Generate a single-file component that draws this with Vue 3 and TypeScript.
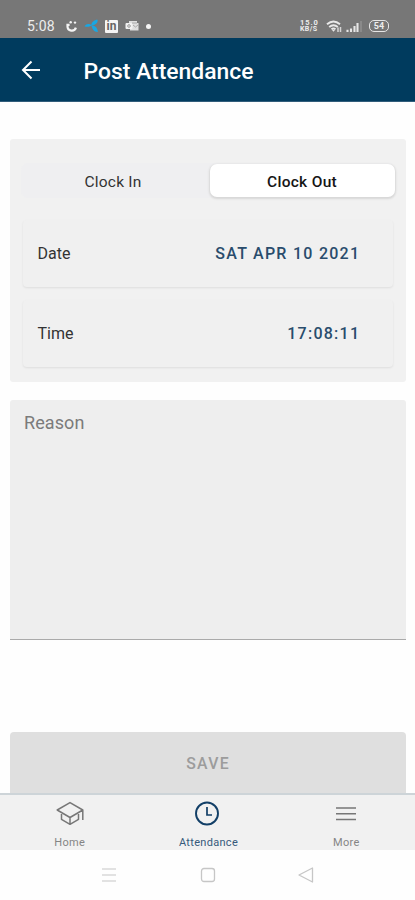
<script setup lang="ts">
import { ref } from 'vue'

type Mode = 'Clock In' | 'Clock Out'

const modes: Mode[] = ['Clock In', 'Clock Out']
const mode = ref<Mode>('Clock Out')
const reason = ref('')

const entries = [
  { label: 'Date', value: 'SAT APR 10 2021' },
  { label: 'Time', value: '17:08:11' },
]
</script>

<template>
  <div class="screen">
    <div class="status">
      <span class="clock">5:08</span>
      <svg class="s-app" viewBox="0 0 12 13" width="12" height="13">
        <path d="M3.600 4.800H1.500v1.400a4.300 4.300 0 0 0 8.400 1.400" fill="none" stroke="#f4f4f4" stroke-width="2.200" />
        <circle cx="4.700" cy="2.200" r="1.200" fill="#f4f4f4" />
        <circle cx="9" cy="2.600" r="1.200" fill="#f4f4f4" />
      </svg>
      <svg class="s-bird" viewBox="0 0 15 14" width="15" height="14">
        <path d="M.5 7.300C2.400 4.600 5 4.400 7.500 6.200 5.300 8 2.500 8.300.5 7.300Z" fill="#18a7e3" />
        <path d="M7 6.800C7.500 3 10.500.6 13.500.8c.8 2.700-1.800 5.400-6.500 6Z" fill="#18a7e3" />
        <path d="M7.600 6.800c3.400-.6 5.800 1.500 6.200 6.200C10.600 13.200 8.200 10.700 7.600 6.800Z" fill="#18a7e3" />
      </svg>
      <span class="linkedin">in</span>
      <svg class="s-mail" viewBox="0 0 14 12" width="14" height="12">
        <path d="M4 1h8v2h1.500v7.500H5V9H4Z" fill="#dedede" />
        <rect x=".5" y="3" width="7" height="6" rx="1" fill="#f1f1f1" />
        <circle cx="4" cy="6" r="1.300" fill="none" stroke="#999" />
        <path d="m8 5 2.500 2L13 5M7 3h5" fill="none" stroke="#9b9b9b" stroke-width=".8" />
      </svg>
      <i class="dot"></i>
      <span class="rate"><b>15.0</b><b>KB/S</b></span>
      <svg class="s-wifi" viewBox="0 0 16 13" width="16" height="13">
        <path d="M1 4.300Q7.500-1.300 14 4.300M3.200 6.900q4.300-3.500 8.600 0M5.500 9.200q2-1.400 4 0" fill="none" stroke="#e9e9e9" stroke-width="1.900" />
        <path d="m6 10 1.500 1.800L9 10Z" fill="#e9e9e9" />
        <path d="M12 7.500V12M14.500 7v5" stroke="#d6d6d6" stroke-width="1.500" />
      </svg>
      <svg class="s-signal" viewBox="0 0 16 13" width="16" height="13">
        <path d="M1.500 9.800V12M5 8.500V12M8.500 6v6M11.500 3v9" stroke="#e6e6e6" stroke-width="2.100" />
        <path d="M15 1v11" stroke="#989898" stroke-width="1.200" />
      </svg>
      <span class="battery"><b>54</b></span>
    </div>

    <header class="header">
      <svg viewBox="0 0 20 20" width="20" height="20">
        <path d="M10.500 1.500 2 10l8.500 8.500M2.300 10H19" fill="none" stroke="#fff" stroke-width="2" />
      </svg>
      <h1>Post Attendance</h1>
    </header>

    <main class="content">
      <section class="panel">
        <div class="segment">
          <button v-for="m in modes" :key="m" type="button" :class="{ active: mode === m }" @click="mode = m">{{ m }}</button>
        </div>
        <div v-for="entry in entries" :key="entry.label" class="entry">
          <span>{{ entry.label }}</span>
          <strong>{{ entry.value }}</strong>
        </div>
      </section>
      <textarea v-model="reason" class="reason" placeholder="Reason"></textarea>
      <button class="save" type="button" disabled>SAVE</button>
    </main>

    <nav class="tabs">
      <a class="tab home">
        <svg viewBox="0 0 28 26" width="28" height="26" fill="none" stroke="#777" stroke-width="1.500" stroke-linejoin="round">
          <path d="M1.200 9 14 1.600 26.800 9 14 16.500ZM5.500 11.800v6.500L14 23.300l8.500-5v-6.500M14 16.500v6.800M26.800 9v10" />
        </svg>
        <span>Home</span>
      </a>
      <a class="tab current">
        <svg viewBox="0 0 28 26" width="28" height="26" fill="none" stroke="#123f67" stroke-width="1.900">
          <circle cx="14" cy="12.500" r="11" />
          <path d="M14 6v8h5" stroke-width="1.700" />
        </svg>
        <span>Attendance</span>
      </a>
      <a class="tab more">
        <svg viewBox="0 0 28 26" width="28" height="26" fill="none" stroke="#777" stroke-width="1.600">
          <path d="M4 7h20M4 12.800h20M4 18.500h20" />
        </svg>
        <span>More</span>
      </a>
    </nav>

    <div class="system">
      <svg viewBox="0 0 16 16" width="16" height="16" fill="none" stroke="#c6c6c6" stroke-width="1.200">
        <path d="M1 2h14M1 8h14M1 14h14" />
      </svg>
      <svg viewBox="0 0 16 16" width="16" height="16" fill="none" stroke="#c6c6c6" stroke-width="1.300">
        <rect x="1.500" y="1.500" width="13" height="13" rx="2.500" />
      </svg>
      <svg viewBox="0 0 16 16" width="16" height="16" fill="none" stroke="#c6c6c6" stroke-width="1.300" stroke-linejoin="round">
        <path d="M14.500 1v14L1 8Z" />
      </svg>
    </div>
  </div>
</template>

<style>
body { background: #fff; }
</style>

<style scoped>
* { box-sizing: border-box; }
.screen {
  width: 415px;
  height: 900px;
  display: flex;
  flex-direction: column;
  overflow: hidden;
  background: #fefefe;
  font-family: Roboto, "Liberation Sans", sans-serif;
  color: #333;
}
button, textarea { font: inherit; border: 0; margin: 0; }
svg { display: block; flex: none; }
.status {
  height: 37.500px;
  flex: none;
  display: flex;
  align-items: center;
  padding: 15px 26px 0 27px;
  background: #777;
  color: #ededed;
}
.clock { width: 39px; font-size: 14px; letter-spacing: .2px; line-height: 16px; }
.s-bird { margin-left: 6px; }
.linkedin {
  width: 13px;
  height: 13px;
  margin-left: 6px;
  border-radius: 1px;
  background: #f5f5f5;
  color: #656565;
  font-size: 12px;
  font-weight: 700;
  line-height: 13px;
  text-align: center;
}
.s-mail { margin-left: 7px; }
.dot { width: 5px; height: 5px; border-radius: 50%; background: #f5f5f5; margin-left: 7px; }
.rate { width: 19px; margin-left: auto; display: flex; flex-direction: column; font-size: 7.500px; line-height: 7.500px; letter-spacing: .9px; }
.rate b:last-child { font-size: 7px; letter-spacing: .4px; }
.s-wifi { margin-left: 7px; }
.s-signal { margin-left: 4px; }
.battery {
  width: 20px;
  height: 12px;
  margin-left: 7px;
  border: 1.500px solid #e5e5e5;
  border-radius: 5px;
  font-size: 9px;
  line-height: 10px;
  text-align: center;
}
.header {
  height: 64.500px;
  flex: none;
  display: flex;
  align-items: center;
  gap: 42.500px;
  padding: 1px 21px 0;
  background: #003b5e;
  border-bottom: 1px solid #315d7b;
}
h1 { margin: 4px 0 0; color: #fff; font-size: 22.900px; line-height: 28px; font-weight: 500; }
.content { height: 691px; flex: none; padding: 37px 9px 0 10px; }
.panel {
  height: 243px;
  padding: 24px 11px 15px;
  background: #f1f1f1;
  border-radius: 3px;
  display: flex;
  flex-direction: column;
}
.segment { height: 35px; flex: none; display: grid; grid-template-columns: 1fr 1fr; background: #efeff1; border-radius: 7px; margin-bottom: 22px; }
.segment button { background: transparent; padding: 2px 3px 0 0; font-size: 15.500px; color: #333; letter-spacing: .2px; }
.segment button.active {
  margin: 1px 0 1px 2px;
  border-radius: 7px;
  background: #fff;
  color: #151515;
  font-weight: 500;
  letter-spacing: .3px;
  padding-right: 1px;
  box-shadow: 0 1px 2px 1px #d7d7d7;
}
.entry {
  height: 67px;
  flex: none;
  margin: 0 2px 13px;
  padding: 0 34px 0 14.500px;
  display: flex;
  align-items: center;
  justify-content: space-between;
  border-radius: 4px;
  background: #f0f0f0;
  box-shadow: 0 1px 2px #dedede;
  font-size: 16px;
}
.entry strong { color: #294c6c; font-size: 16px; font-weight: 500; letter-spacing: 1.260px; margin-right: -1.300px; }
.reason {
  display: block;
  width: 100%;
  height: 240px;
  margin-top: 18px;
  padding: 12px 14px;
  resize: none;
  outline: none;
  border-bottom: 1px solid #aaa;
  border-radius: 3px 3px 0 0;
  background: #eee;
  font-size: 18px;
  line-height: 22px;
  letter-spacing: .1px;
}
.reason::placeholder { color: #7b7b7b; opacity: 1; }
.save {
  display: block;
  width: 100%;
  height: 61px;
  margin-top: 92px;
  padding: 2px 0 0;
  border-radius: 4px 4px 0 0;
  background: #dfdfdf;
  color: #9c9c9c;
  font-size: 15.800px;
  font-weight: 500;
  letter-spacing: 1.300px;
}
.tabs {
  height: 57px;
  flex: none;
  display: grid;
  grid-template-columns: repeat(3, 1fr);
  background: #f1f1f1;
  border-top: 2px solid #cdd4d8;
}
.tab { display: flex; flex-direction: column; align-items: center; padding-top: 6px; color: #858585; font-size: 11px; line-height: 13px; letter-spacing: .3px; }
.tab span { margin-top: 9px; }
.tab.home { padding-left: 1px; }
.tab.more span { margin-left: 1px; }
.tab.current { color: #365a7b; }
.tab.current span { margin-left: 2px; }
.system { height: 50px; flex: none; display: flex; justify-content: space-between; padding: 17px 101px 0 101px; }
</style>
